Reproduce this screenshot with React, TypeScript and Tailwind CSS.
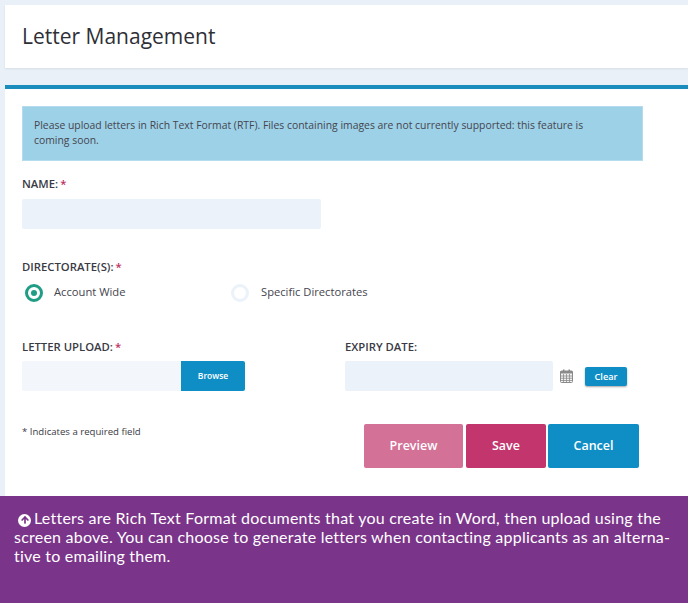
import React from 'react';
import { ArrowUp } from 'lucide-react';

function Req() {
  return <span className="ml-[2px] text-[#c0305f]">*</span>;
}

function CalendarIcon() {
  return (
    <svg width="13" height="14" viewBox="0 0 13 14" className="text-[#8a8a8a]">
      <rect x="0.5" y="2" width="12" height="11.5" rx="1" fill="#f2f2f2" stroke="currentColor" />
      <rect x="0.5" y="2" width="12" height="2.5" fill="currentColor" />
      <rect x="3" y="0.5" width="1.5" height="3" fill="currentColor" />
      <rect x="8.5" y="0.5" width="1.5" height="3" fill="currentColor" />
      <path d="M1 7h11M1 9.25h11M1 11.5h11M3.5 5v8M6.5 5v8M9.5 5v8" stroke="currentColor" strokeWidth="0.8" />
    </svg>
  );
}

export default function App() {
  return (
    <div className="w-[688px] h-[603px] overflow-hidden bg-[#e9f0f8] flex flex-col font-['Open_Sans',sans-serif] text-[#3a3a44]">
      {/* Page title */}
      <div className="mt-[5px] ml-[5px] h-[63px] bg-white shadow-[0_1px_2px_rgba(0,0,0,0.08)] pl-[17px] flex items-center">
        <h1 className="text-[21px] leading-[28px] mb-[1px] text-[#2f2f37]">Letter Management</h1>
      </div>

      {/* Form panel */}
      <div className="mt-[17px] ml-[5px] h-[411px] bg-white border-t-4 border-[#1a8dbd] pl-[17px]">
        <div className="mt-[17px] w-[621px] h-[55px] bg-[#9dd1e7] border border-[#b5dcec] pl-[11px] pt-[11px] text-[10.4px] leading-[15px] text-[#45454f]">
          Please upload letters in Rich Text Format (RTF). Files containing images are not currently supported: this feature is
          <br />
          coming soon.
        </div>

        <div className="mt-[15px] text-[11.3px] leading-[16px] font-semibold">
          NAME:<Req />
        </div>
        <div className="mt-[7px] w-[299px] h-[30px] bg-[#ebf2fa] rounded-[2px]" />

        <div className="mt-[30px] text-[11.3px] leading-[16px] font-semibold">
          DIRECTORATE(S):<Req />
        </div>
        <div className="mt-[8px] h-[19px] flex items-center text-[11.2px] text-[#45454f]">
          <span className="ml-[3px] w-[18px] h-[18px] rounded-full border-[3px] border-[#1f9e85] flex items-center justify-center">
            <span className="w-[6px] h-[6px] rounded-full bg-[#1f9e85]" />
          </span>
          <span className="ml-[11px] w-[177px]">Account Wide</span>
          <span className="w-[18px] h-[18px] rounded-full border-[3px] border-[#ebf2fa]" />
          <span className="ml-[12px]">Specific Directorates</span>
        </div>

        <div className="mt-[37px] flex">
          <div className="w-[323px]">
            <div className="text-[11.3px] leading-[16px] font-semibold">
              LETTER UPLOAD:<Req />
            </div>
            <div className="mt-[6px] flex w-[223px] h-[30px]">
              <div className="w-[159px] bg-[#f3f6fa] rounded-l-[2px]" />
              <div className="w-[64px] bg-[#0f8ec6] rounded-r-[2px] text-white text-[8.5px] font-semibold flex items-center justify-center">
                Browse
              </div>
            </div>
          </div>
          <div>
            <div className="text-[11.3px] leading-[16px] font-semibold">EXPIRY DATE:</div>
            <div className="mt-[6px] flex items-center">
              <div className="w-[208px] h-[30px] bg-[#ebf2fa] rounded-[2px]" />
              <span className="ml-[7px] mt-[-1px] flex"><CalendarIcon /></span>
              <div className="ml-[12px] mt-[1px] w-[42px] h-[19px] bg-[#0f8ec6] rounded-[2px] shadow-[0_1px_2px_rgba(0,0,0,0.35)] text-white text-[9.2px] font-semibold flex items-center justify-center">
                Clear
              </div>
            </div>
          </div>
        </div>

        <div className="flex">
          <div className="w-[342px] mt-[34px] text-[9.6px] leading-[14px]">* Indicates a required field</div>
          <div className="mt-[33px] flex text-white text-[12.5px] font-semibold">
            <div className="w-[99px] h-[44px] bg-[#d37197] rounded-[2px] flex items-center justify-center">Preview</div>
            <div className="ml-[3px] w-[80px] h-[44px] bg-[#c2366d] rounded-[2px] flex items-center justify-center">Save</div>
            <div className="ml-[2px] w-[91px] h-[44px] bg-[#0f8ec6] rounded-[2px] flex items-center justify-center">Cancel</div>
          </div>
        </div>
      </div>

      {/* Caption */}
      <div className="h-[107px] bg-[#7a3489] pl-[14px] pt-[12px] pr-[10px] font-['Lato',sans-serif] text-white text-[16px] tracking-[0.23px] leading-[19px]">
        <span className="inline-flex align-[-1px] ml-[4px] mr-[3px] w-[13px] h-[13px] rounded-full bg-white items-center justify-center">
          <ArrowUp size={10} strokeWidth={4} className="text-[#7a3489]" />
        </span>
        Letters are Rich Text Format documents that you create in Word, then upload using the
        <br />
        screen above. You can choose to generate letters when contacting applicants as an alterna-
        <br />
        tive to emailing them.
      </div>
    </div>
  );
}
